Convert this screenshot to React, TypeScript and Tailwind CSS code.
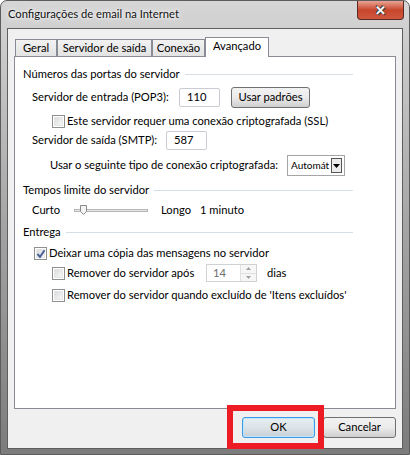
import React from 'react';

function Checkbox({ checked = false }: { checked?: boolean }) {
  return (
    <span className="relative flex h-[13px] w-[13px] shrink-0 items-center justify-center border border-[#8e8f8f] bg-white">
      <span className="h-[9px] w-[9px] border border-[#e6e6e6] bg-gradient-to-br from-[#d9dbdf] to-[#f7f7f7]" />
      {checked && (
        <svg className="absolute left-[1px] top-[1px]" width="10" height="10" viewBox="0 0 10 10">
          <path d="M1.5 5 L4 7.8 L8.6 1.2" fill="none" stroke="#4a5f97" strokeWidth="2" />
        </svg>
      )}
    </span>
  );
}

function GroupHeader({ title }: { title: string }) {
  return (
    <div className="flex h-[16px] items-center pl-[8px] pr-[42px]">
      <span className="whitespace-nowrap">{title}</span>
      <span className="ml-[5px] h-px flex-1 bg-[#d5dfe5]" />
    </div>
  );
}

function TextBox({ value, width }: { value: string; width: string }) {
  return (
    <div className={`flex h-[19px] ${width} shrink-0 items-center rounded-[2px] border border-[#c9ccd2] bg-white pl-[7px]`}>
      {value}
    </div>
  );
}

function Tab({ label, width, active = false }: { label: string; width: string; active?: boolean }) {
  if (active) {
    return (
      <div className={`relative z-10 -mb-px flex h-[20px] ${width} items-center justify-center border border-b-0 border-[#898c95] bg-white pb-[2px]`}>
        {label}
      </div>
    );
  }
  return (
    <div className={`flex h-[17px] ${width} items-center justify-center border border-b-0 border-[#898c95] bg-gradient-to-b from-[#f2f2f2] to-[#e3e3e3] pt-[1px]`}>
      {label}
    </div>
  );
}

export default function App() {
  return (
    <div className="h-[455px] w-[410px] overflow-hidden whitespace-nowrap bg-white font-['Lato','Liberation_Sans',sans-serif] text-[11.2px] text-black">
      <div className="flex h-full flex-col rounded-t-[7px] border border-[#5c5c5c] bg-gradient-to-b from-[#d6d6d6] via-[#a4a4a4] to-[#7c7c7c] px-[6px] pb-[5px]">
        {/* Title bar */}
        <div className="flex h-[27px] items-start">
          <div className="mt-[5px] flex-1 pl-[1px] text-[11.2px] text-[#111] [text-shadow:0_0_6px_#fff,0_0_3px_#fff]">
            Configurações de email na Internet
          </div>
          <div className="-mr-[1px] flex h-[19px] w-[47px] items-center justify-center rounded-b-[4px] border border-t-0 border-[#5a2a24] bg-gradient-to-b from-[#e8a394] via-[#c7452b] to-[#d0573f]">
            <span className="text-[13px] font-bold leading-none text-white [text-shadow:0_0_1px_#333,1px_1px_0_#444,-1px_-1px_0_#444]">
              ✕
            </span>
          </div>
        </div>

        {/* Client area */}
        <div className="flex flex-1 flex-col border border-[#5e5e5e] bg-[#f0f0f0] px-[6px]">
          {/* Tabs */}
          <div className="mt-[8px] flex items-end pl-[1px]">
            <Tab label="Geral" width="w-[42px]" />
            <Tab label="Servidor de saída" width="w-[95px]" />
            <Tab label="Conexão" width="w-[53px]" />
            <Tab label="Avançado" width="w-[64px]" active />
          </div>

          {/* Tab page */}
          <div className="flex h-[353px] flex-col border border-[#898c95] bg-white pt-[9px]">
            <GroupHeader title="Números das portas do servidor" />

            <div className="mt-[5px] flex h-[21px] items-center pl-[17px]">
              <span className="w-[147px]">Servidor de entrada (POP3):</span>
              <TextBox value="110" width="w-[41px]" />
              <div className="ml-[11px] flex h-[21px] w-[79px] items-center justify-center rounded-[3px] border border-[#707070] bg-gradient-to-b from-[#f2f2f2] via-[#ebebeb] to-[#cfcfcf]">
                Usar padrões
              </div>
            </div>

            <div className="mt-[6px] flex h-[14px] items-center gap-[2px] pl-[37px]">
              <Checkbox />
              <span>Este servidor requer uma conexão criptografada (SSL)</span>
            </div>

            <div className="mt-[3px] flex h-[19px] items-center pl-[17px]">
              <span className="w-[134px]">Servidor de saída (SMTP):</span>
              <TextBox value="587" width="w-[41px]" />
            </div>

            <div className="mt-[5px] flex h-[21px] items-center pl-[35px]">
              <span className="w-[237px]">Usar o seguinte tipo de conexão criptografada:</span>
              <div className="flex h-[21px] w-[58px] items-center justify-between border border-[#a5a5a5] bg-white pl-[3px] pr-[2px] text-[10px]">
                <span>Automát</span>
                <span className="flex h-[15px] w-[11px] items-center justify-center border border-[#555] bg-[#ececec]">
                  <svg width="7" height="4" viewBox="0 0 7 4">
                    <path d="M0 0 H7 L3.5 4 Z" fill="#000" />
                  </svg>
                </span>
              </div>
            </div>

            <div className="mt-[6px]">
              <GroupHeader title="Tempos limite do servidor" />
            </div>

            <div className="mt-[4px] flex h-[16px] items-center pl-[17px]">
              <span className="w-[42px]">Curto</span>
              <div className="relative h-[12px] w-[74px]">
                <span className="absolute left-0 right-0 top-[5px] h-[3px] border border-[#b5b5b5] bg-[#e7e7e7]" />
                <svg className="absolute left-[6px] top-[1px]" width="7" height="10" viewBox="0 0 7 10">
                  <path d="M0.5 0.5 H6.5 V6.5 L3.5 9.5 L0.5 6.5 Z" fill="#f4f4f4" stroke="#8a8a8a" />
                </svg>
              </div>
              <span className="ml-[13px] w-[39px]">Longo</span>
              <span>1 minuto</span>
            </div>

            <div className="mt-[6px]">
              <GroupHeader title="Entrega" />
            </div>

            <div className="mt-[6px] flex h-[14px] items-center gap-[2px] pl-[19px]">
              <Checkbox checked />
              <span>Deixar uma cópia das mensagens no servidor</span>
            </div>

            <div className="mt-[4px] flex h-[18px] items-center pl-[37px]">
              <Checkbox />
              <span className="ml-[2px] w-[139px]">Remover do servidor após</span>
              <div className="flex h-[18px] w-[51px] items-center border border-[#cfd1d5] bg-white">
                <span className="flex-1 pl-[6px] text-[#6d6d6d]">14</span>
                <span className="flex h-full w-[16px] flex-col border-l border-[#e0e0e0]">
                  <span className="flex flex-1 items-center justify-center border-b border-[#e0e0e0] bg-[#f6f6f6]">
                    <svg width="5" height="3" viewBox="0 0 5 3">
                      <path d="M0 3 L2.5 0 L5 3 Z" fill="#a0a0a0" />
                    </svg>
                  </span>
                  <span className="flex flex-1 items-center justify-center bg-[#f6f6f6]">
                    <svg width="5" height="3" viewBox="0 0 5 3">
                      <path d="M0 0 H5 L2.5 3 Z" fill="#a0a0a0" />
                    </svg>
                  </span>
                </span>
              </div>
              <span className="ml-[10px]">dias</span>
            </div>

            <div className="mt-[6px] flex h-[14px] items-center gap-[2px] pl-[37px]">
              <Checkbox />
              <span>Remover do servidor quando excluído de 'Itens excluídos'</span>
            </div>
          </div>

          {/* Buttons */}
          <div className="flex flex-1 items-start justify-end gap-[8px] pt-[8px]">
            <div className="relative">
              <div className="flex h-[21px] w-[73px] items-center justify-center rounded-[3px] border border-[#3c9ae4] bg-gradient-to-b from-[#e8eef2] via-[#dde4e8] to-[#c6d0d6] shadow-[inset_0_0_0_1px_#bfe6fb]">
                OK
              </div>
              <div className="pointer-events-none absolute -left-[15px] -right-[9px] -top-[12px] -bottom-[11px] border-[6px] border-[#ed1c24]" />
            </div>
            <div className="flex h-[21px] w-[73px] items-center justify-center rounded-[3px] border border-[#707070] bg-gradient-to-b from-[#f2f2f2] via-[#ebebeb] to-[#cfcfcf]">
              Cancelar
            </div>
          </div>
        </div>
      </div>
    </div>
  );
}
